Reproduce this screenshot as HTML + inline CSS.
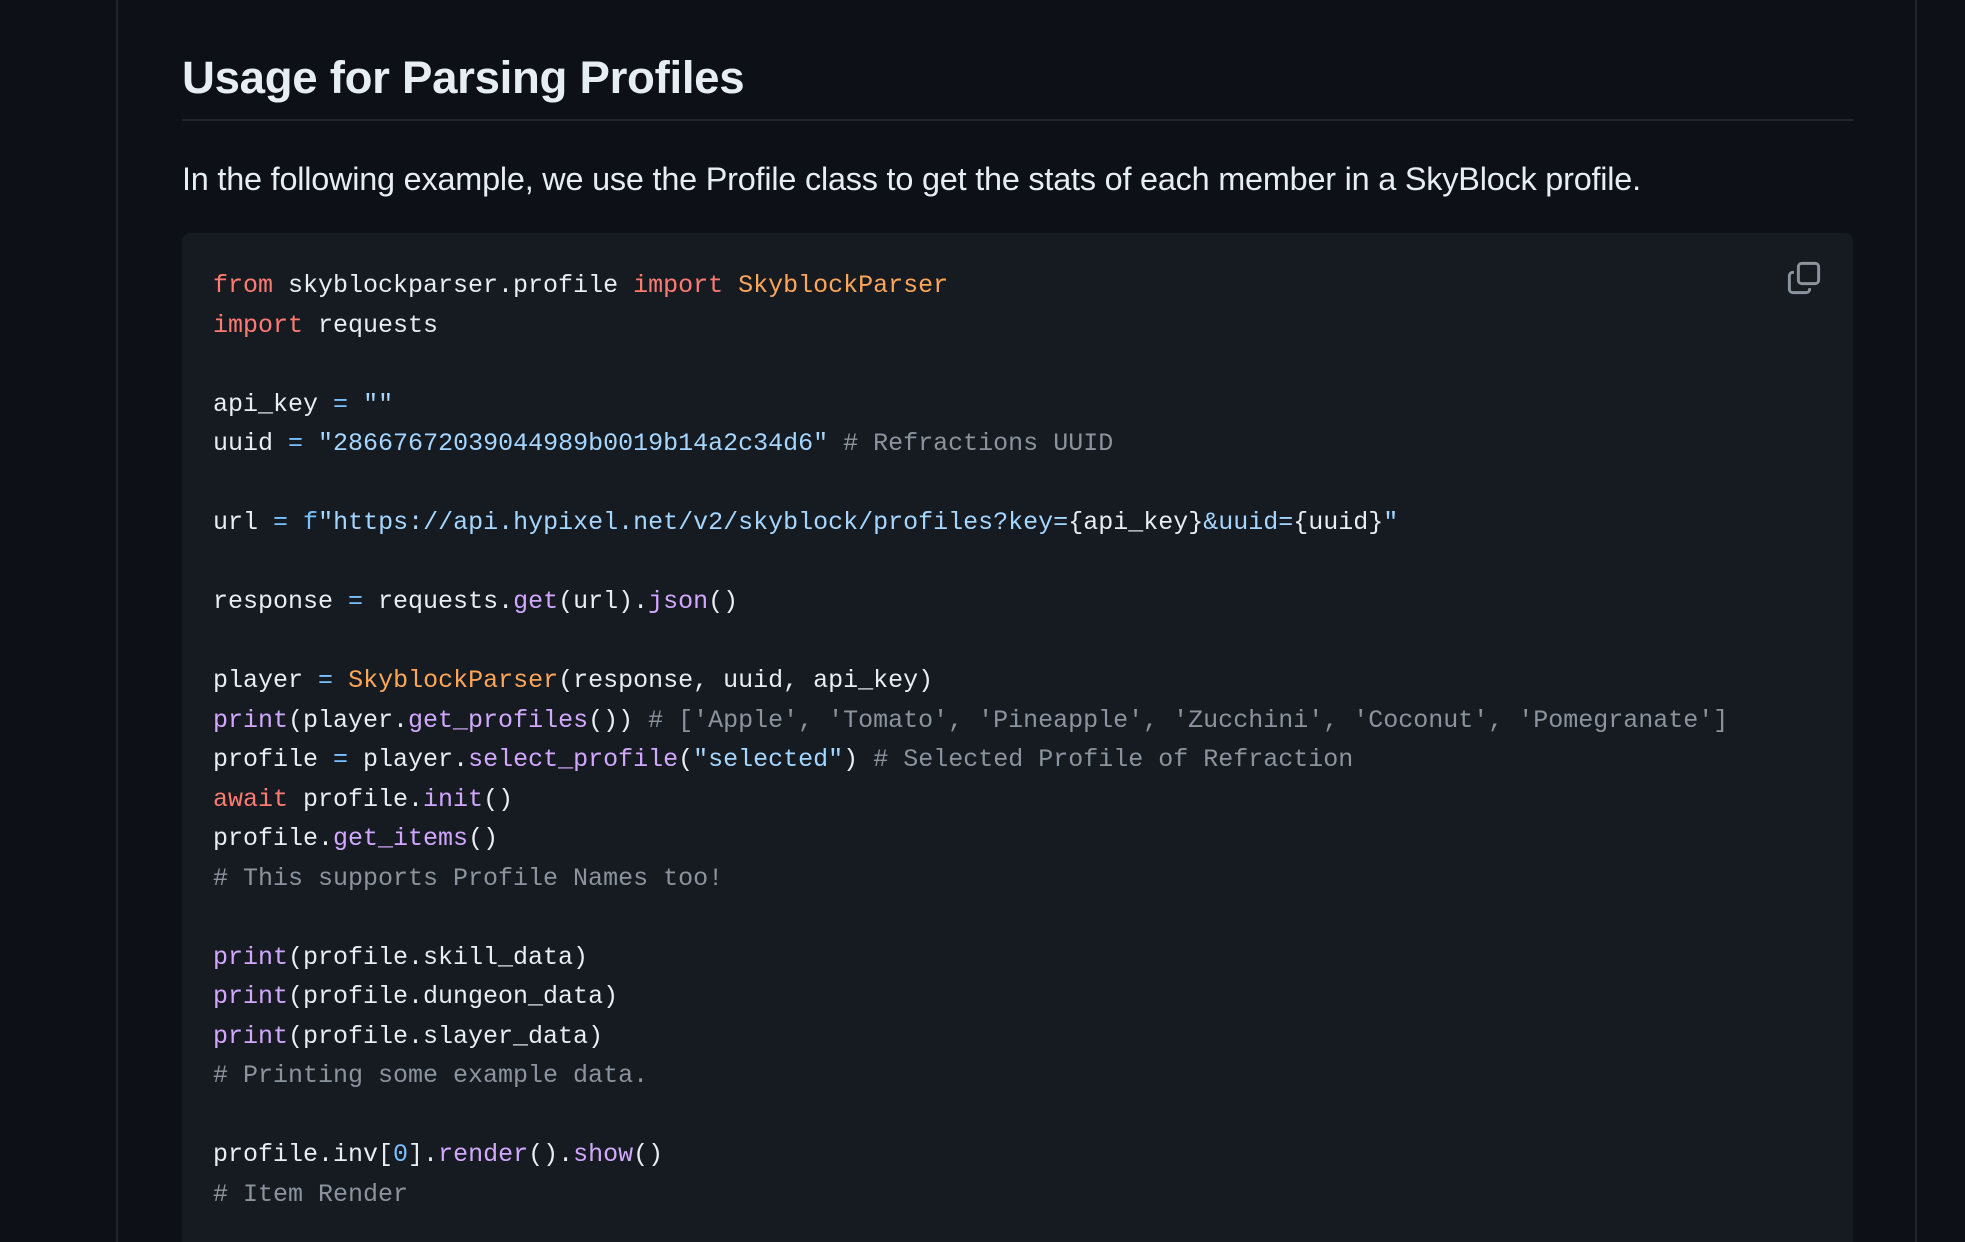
<!DOCTYPE html>
<html><head><meta charset="utf-8"><style>
html,body{margin:0;padding:0;background:#0d1117;width:1965px;height:1242px;overflow:hidden}
.wrap{position:absolute;left:116px;top:0;width:1801px;height:1242px;border-left:2px solid #21262d;border-right:2px solid #21262d;box-sizing:border-box}
h2{position:absolute;left:182px;top:48px;margin:0;font:600 45.6px/60px "Liberation Sans",sans-serif;color:#e6edf3;letter-spacing:-0.3px}
.rule{position:absolute;left:182px;top:119px;width:1671px;height:2px;background:#21262d}
p{position:absolute;left:182px;top:158px;margin:0;font:400 32.4px/42px "Liberation Sans",sans-serif;color:#e6edf3;letter-spacing:-0.2px;white-space:nowrap}
.code{position:absolute;left:182px;top:233px;width:1671px;height:1009px;background:#161b22;border-radius:8px 8px 0 0}
pre{position:absolute;left:213px;top:266px;margin:0;font:400 25px/39.5px "Liberation Mono",monospace;color:#e6edf3}
.k{color:#ff7b72}.c{color:#ffa657}.s{color:#a5d6ff}.f{color:#d2a8ff}.m{color:#8b949e}.o{color:#79c0ff}
svg{position:absolute;left:1786px;top:260px}
</style></head><body>
<div class="wrap"></div>
<h2>Usage for Parsing Profiles</h2>
<div class="rule"></div>
<p>In the following example, we use the Profile class to get the stats of each member in a SkyBlock profile.</p>
<div class="code"></div>
<svg width="36" height="36" viewBox="0 0 16 16"><rect x="5.5" y="1.5" width="9" height="9" rx="1.5" fill="none" stroke="#8b949e" stroke-width="1.3"/><path d="M3.5 5.5H3A1.5 1.5 0 0 0 1.5 7v6A1.5 1.5 0 0 0 3 14.5h6A1.5 1.5 0 0 0 10.5 13v-.5" fill="none" stroke="#8b949e" stroke-width="1.3"/></svg>
<pre><span class="k">from</span> skyblockparser.profile <span class="k">import</span> <span class="c">SkyblockParser</span>
<span class="k">import</span> requests

api_key <span class="o">=</span> <span class="s">""</span>
uuid <span class="o">=</span> <span class="s">"28667672039044989b0019b14a2c34d6"</span> <span class="m"># Refractions UUID</span>

url <span class="o">=</span> <span class="o">f</span><span class="s">"https://api.hypixel.net/v2/skyblock/profiles?key=</span>{api_key}<span class="s">&amp;uuid=</span>{uuid}<span class="s">"</span>

response <span class="o">=</span> requests.<span class="f">get</span>(url).<span class="f">json</span>()

player <span class="o">=</span> <span class="c">SkyblockParser</span>(response, uuid, api_key)
<span class="f">print</span>(player.<span class="f">get_profiles</span>()) <span class="m"># ['Apple', 'Tomato', 'Pineapple', 'Zucchini', 'Coconut', 'Pomegranate']</span>
profile <span class="o">=</span> player.<span class="f">select_profile</span>(<span class="s">"selected"</span>) <span class="m"># Selected Profile of Refraction</span>
<span class="k">await</span> profile.<span class="f">init</span>()
profile.<span class="f">get_items</span>()
<span class="m"># This supports Profile Names too!</span>

<span class="f">print</span>(profile.skill_data)
<span class="f">print</span>(profile.dungeon_data)
<span class="f">print</span>(profile.slayer_data)
<span class="m"># Printing some example data.</span>

profile.inv[<span class="o">0</span>].<span class="f">render</span>().<span class="f">show</span>()
<span class="m"># Item Render</span></pre>
</body></html>
